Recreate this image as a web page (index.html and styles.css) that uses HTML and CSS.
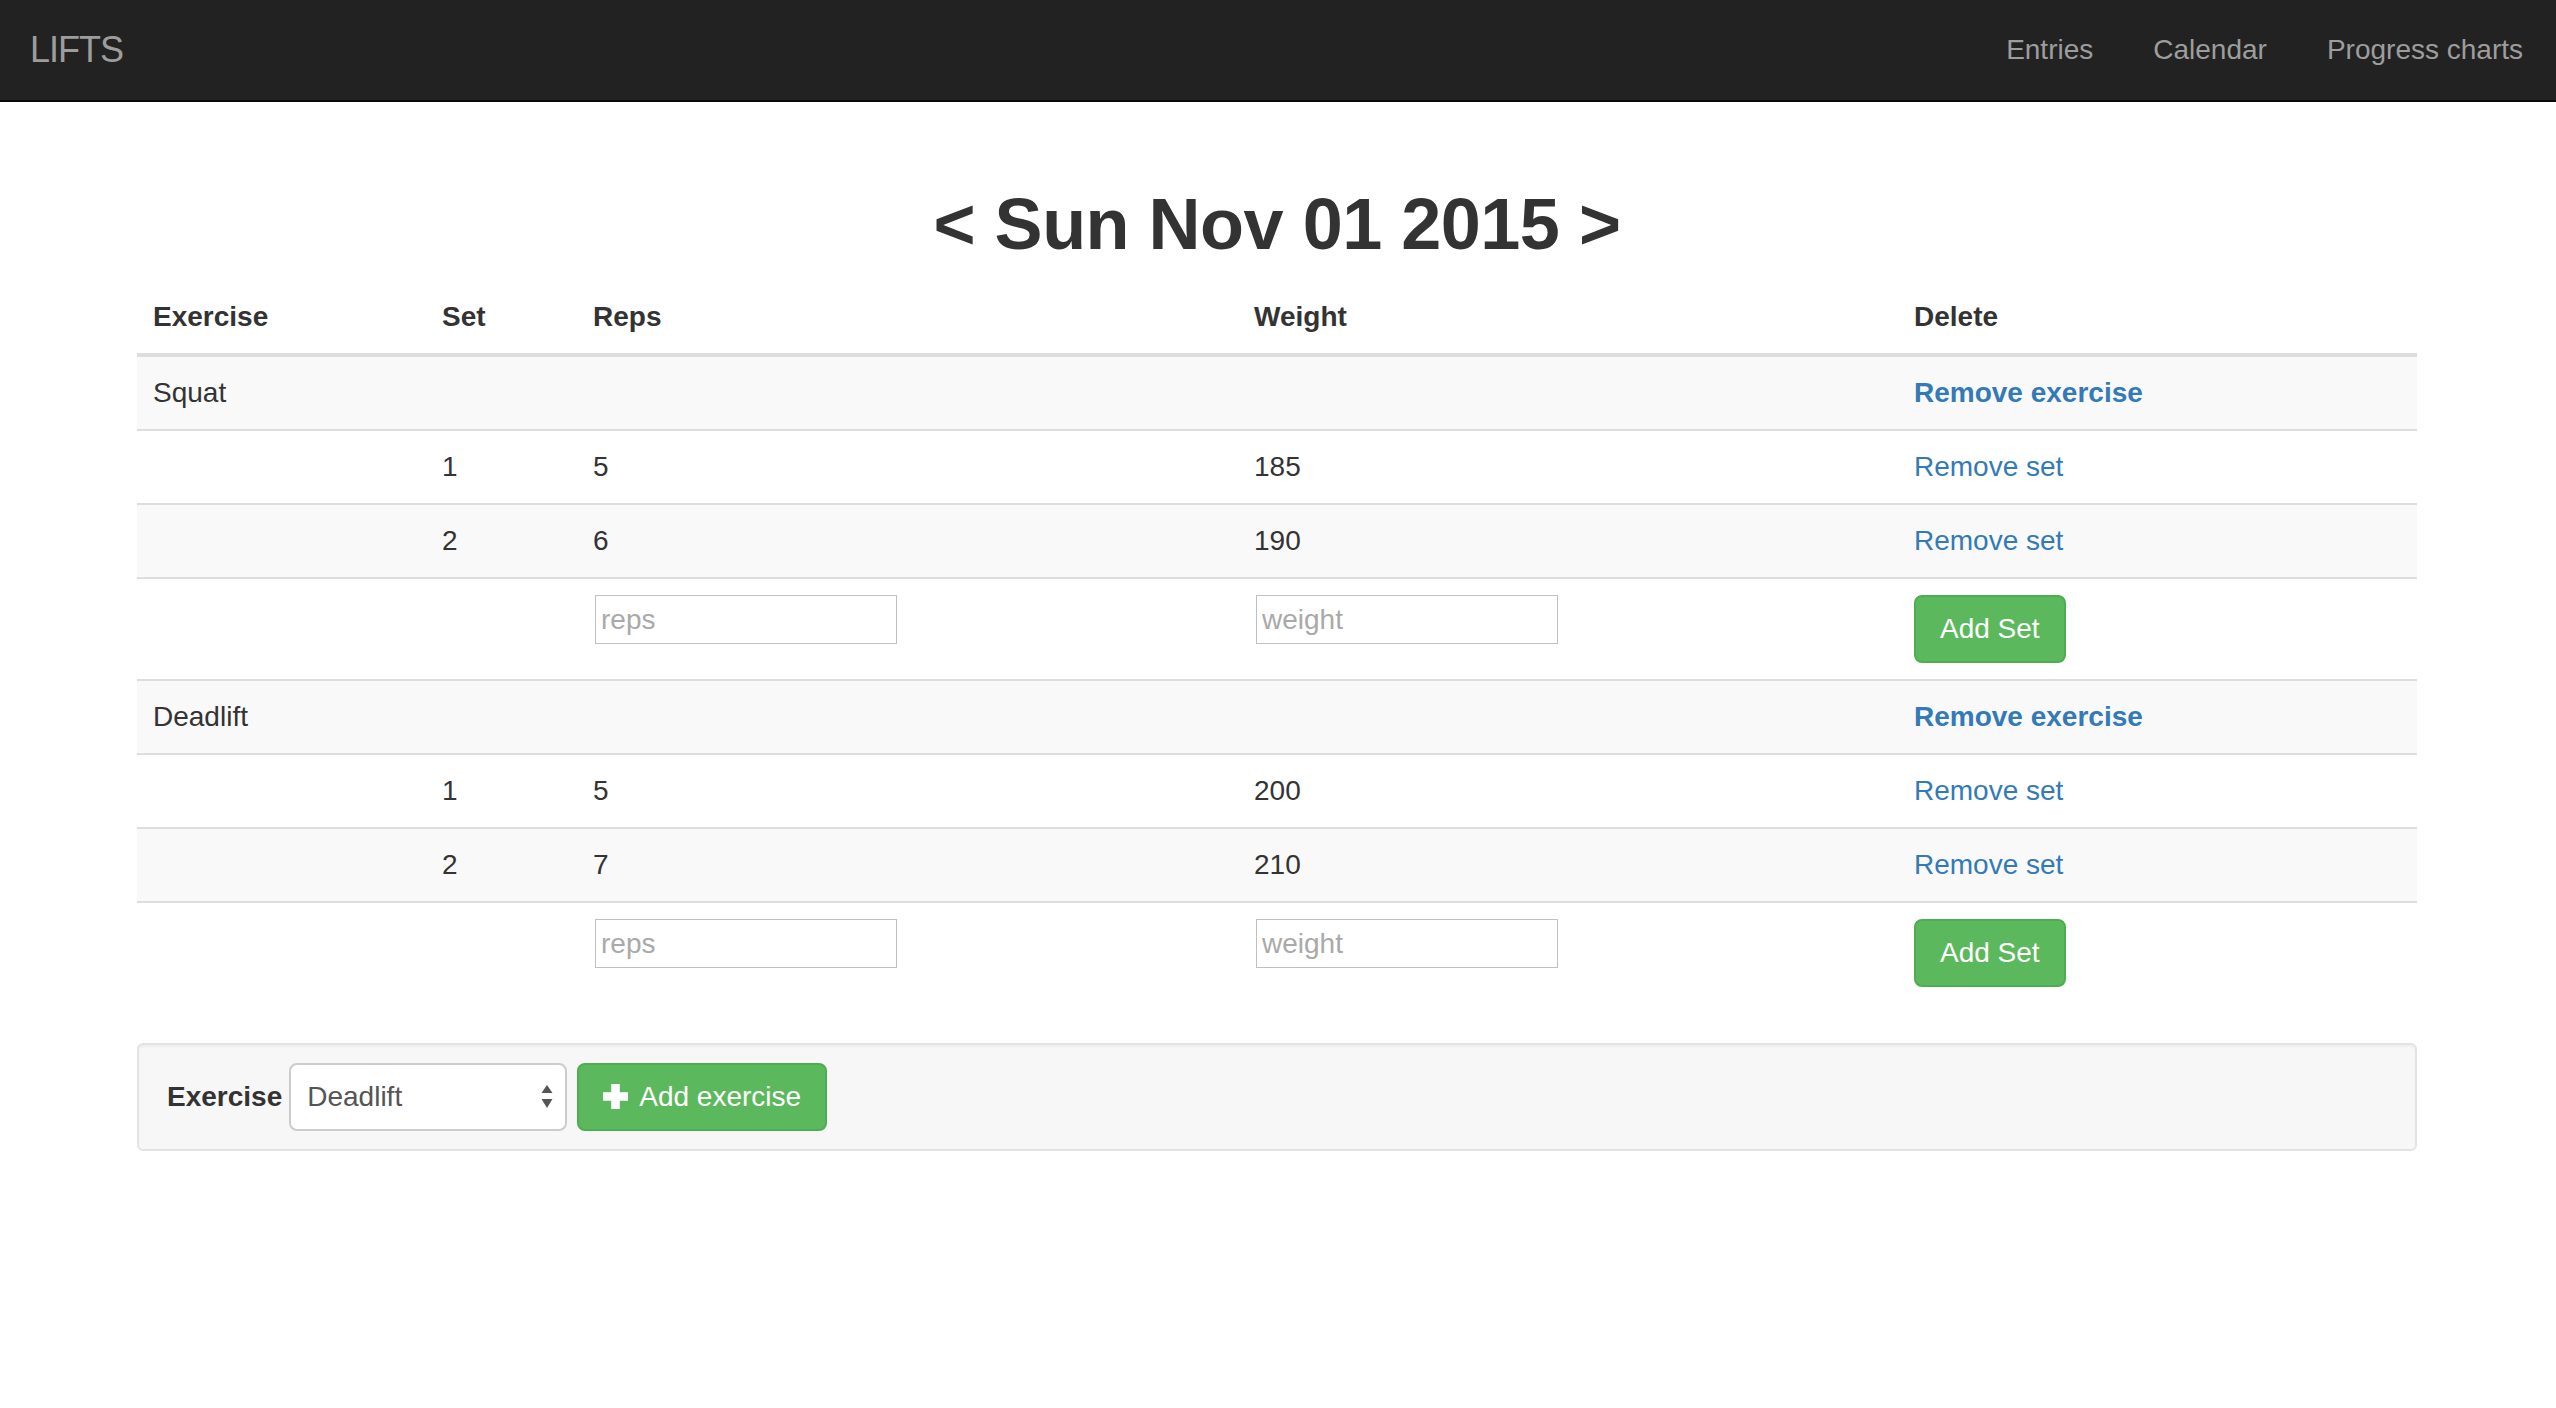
FILE: index.html
```html
<!DOCTYPE html>
<html lang="en">
<head>
<meta charset="utf-8">
<title>Lifts</title>
<link rel="stylesheet" href="styles.css">
</head>
<body>
<nav class="navbar">
  <a class="brand" href="#">LIFTS</a>
  <ul class="nav">
    <li><a href="#">Entries</a></li>
    <li><a href="#">Calendar</a></li>
    <li><a href="#">Progress charts</a></li>
  </ul>
</nav>
<main class="container">
  <h1 class="date-title">&lt; Sun Nov 01 2015 &gt;</h1>
  <table class="lifts">
    <thead>
      <tr>
        <th class="c-ex">Exercise</th>
        <th class="c-set">Set</th>
        <th class="c-reps">Reps</th>
        <th class="c-weight">Weight</th>
        <th class="c-del">Delete</th>
      </tr>
    </thead>
    <tbody>
      <tr>
        <td>Squat</td><td></td><td></td><td></td>
        <td><a class="link strong" href="#">Remove exercise</a></td>
      </tr>
      <tr>
        <td></td><td>1</td><td>5</td><td>185</td>
        <td><a class="link" href="#">Remove set</a></td>
      </tr>
      <tr>
        <td></td><td>2</td><td>6</td><td>190</td>
        <td><a class="link" href="#">Remove set</a></td>
      </tr>
      <tr class="add-row">
        <td></td><td></td>
        <td><input class="field" type="text" placeholder="reps"></td>
        <td><input class="field" type="text" placeholder="weight"></td>
        <td><button class="btn btn-success" type="button">Add Set</button></td>
      </tr>
      <tr>
        <td>Deadlift</td><td></td><td></td><td></td>
        <td><a class="link strong" href="#">Remove exercise</a></td>
      </tr>
      <tr>
        <td></td><td>1</td><td>5</td><td>200</td>
        <td><a class="link" href="#">Remove set</a></td>
      </tr>
      <tr>
        <td></td><td>2</td><td>7</td><td>210</td>
        <td><a class="link" href="#">Remove set</a></td>
      </tr>
      <tr class="add-row">
        <td></td><td></td>
        <td><input class="field" type="text" placeholder="reps"></td>
        <td><input class="field" type="text" placeholder="weight"></td>
        <td><button class="btn btn-success" type="button">Add Set</button></td>
      </tr>
    </tbody>
  </table>
  <form class="well">
    <label class="well-label" for="exercise">Exercise</label>
    <div class="select-wrap">
      <select id="exercise" class="select">
        <option>Squat</option>
        <option selected>Deadlift</option>
      </select>
      <svg class="select-arrows" width="12" height="24" viewBox="0 0 12 24" aria-hidden="true">
        <path d="M6 0L11.5 8H0.5Z" fill="#555"/>
        <path d="M0.5 14H11.5L6 23Z" fill="#555"/>
      </svg>
    </div>
    <button class="btn btn-success btn-add" type="button">
      <svg class="plus" width="25" height="25" viewBox="0 0 25 25" aria-hidden="true">
        <path d="M8.2 0H16.8V8.2H25V16.8H16.8V25H8.2V16.8H0V8.2H8.2Z" fill="#fff"/>
      </svg>
      <span>Add exercise</span>
    </button>
  </form>
</main>
</body>
</html>
```

FILE: styles.css
```css
* {
  box-sizing: border-box;
}

html, body {
  margin: 0;
  padding: 0;
  background: #fff;
}

body {
  font-family: "Liberation Sans", Arial, Helvetica, sans-serif;
  font-size: 28px;
  line-height: 40px;
  color: #333;
}

a {
  text-decoration: none;
}

/* Navbar */
.navbar {
  display: flex;
  align-items: center;
  justify-content: space-between;
  height: 102px;
  padding: 0 33px 0 30px;
  background: #222;
  border-bottom: 2px solid #080808;
}

.brand {
  font-size: 36px;
  line-height: 40px;
  letter-spacing: -1px;
  color: #9d9d9d;
}

.nav {
  display: flex;
  gap: 60px;
  margin: 0;
  padding: 0;
  list-style: none;
}

.nav a {
  color: #9d9d9d;
  font-size: 28px;
  line-height: 40px;
}

/* Container */
.container {
  width: 2340px;
  margin: 0 auto;
  padding: 83px 31px 0 29px;
}

.date-title {
  margin: 0 0 17px;
  font-size: 72px;
  line-height: 79px;
  font-weight: 700;
  letter-spacing: -0.5px;
  text-align: center;
  color: #333;
}

/* Table */
.lifts {
  width: 100%;
  table-layout: fixed;
  border-collapse: collapse;
  border-spacing: 0;
  margin-bottom: 40px;
}

.lifts th {
  text-align: left;
  vertical-align: bottom;
  padding: 16px;
  font-weight: 700;
  line-height: 40px;
  border-bottom: 4px solid #ddd;
}

.c-ex { width: 289px; }
.c-set { width: 151px; }
.c-reps { width: 661px; }
.c-weight { width: 660px; }
.c-del { width: 519px; }

.lifts td {
  padding: 16px;
  vertical-align: top;
  line-height: 40px;
  border-top: 2px solid #ddd;
}

.lifts tbody tr:nth-child(odd) {
  background: #f9f9f9;
}

.link {
  color: #337ab7;
}

.link.strong {
  font-weight: 700;
}

.field {
  display: block;
  width: 302px;
  height: 49px;
  margin: 0 0 0 2px;
  padding: 0 5px;
  border: 1px solid #c0c0c0;
  border-radius: 0;
  background: #fff;
  font: inherit;
  font-size: 28px;
  color: #555;
}

.field::placeholder {
  color: #a9a9a9;
}

/* Buttons */
.btn {
  display: inline-flex;
  align-items: center;
  height: 68px;
  margin: 0;
  padding: 12px 24px;
  border: 2px solid transparent;
  border-radius: 8px;
  font: inherit;
  font-size: 28px;
  line-height: 40px;
  cursor: pointer;
}

.btn-success {
  color: #fff;
  background: #5cb85c;
  border-color: #4cae4c;
}

.btn-add {
  gap: 11px;
}

.plus {
  display: block;
  margin-top: -2px;
}

/* Well form */
.well {
  display: flex;
  align-items: center;
  margin: 0;
  padding: 18px 18px 18px 28px;
  background: #f7f7f7;
  border: 2px solid #e3e3e3;
  border-radius: 6px;
  box-shadow: inset 0 2px 2px rgba(0, 0, 0, 0.04);
}

.well-label {
  font-weight: 700;
  margin-right: 7px;
}

.select-wrap {
  position: relative;
  margin-right: 10px;
}

.select {
  display: block;
  width: 278px;
  height: 68px;
  margin: 0;
  padding: 0 16px;
  border: 2px solid #ccc;
  border-radius: 8px;
  background: #fff;
  font: inherit;
  font-size: 28px;
  color: #555;
  appearance: none;
  -webkit-appearance: none;
}

.select-arrows {
  position: absolute;
  right: 14px;
  top: 22px;
  pointer-events: none;
}
```
